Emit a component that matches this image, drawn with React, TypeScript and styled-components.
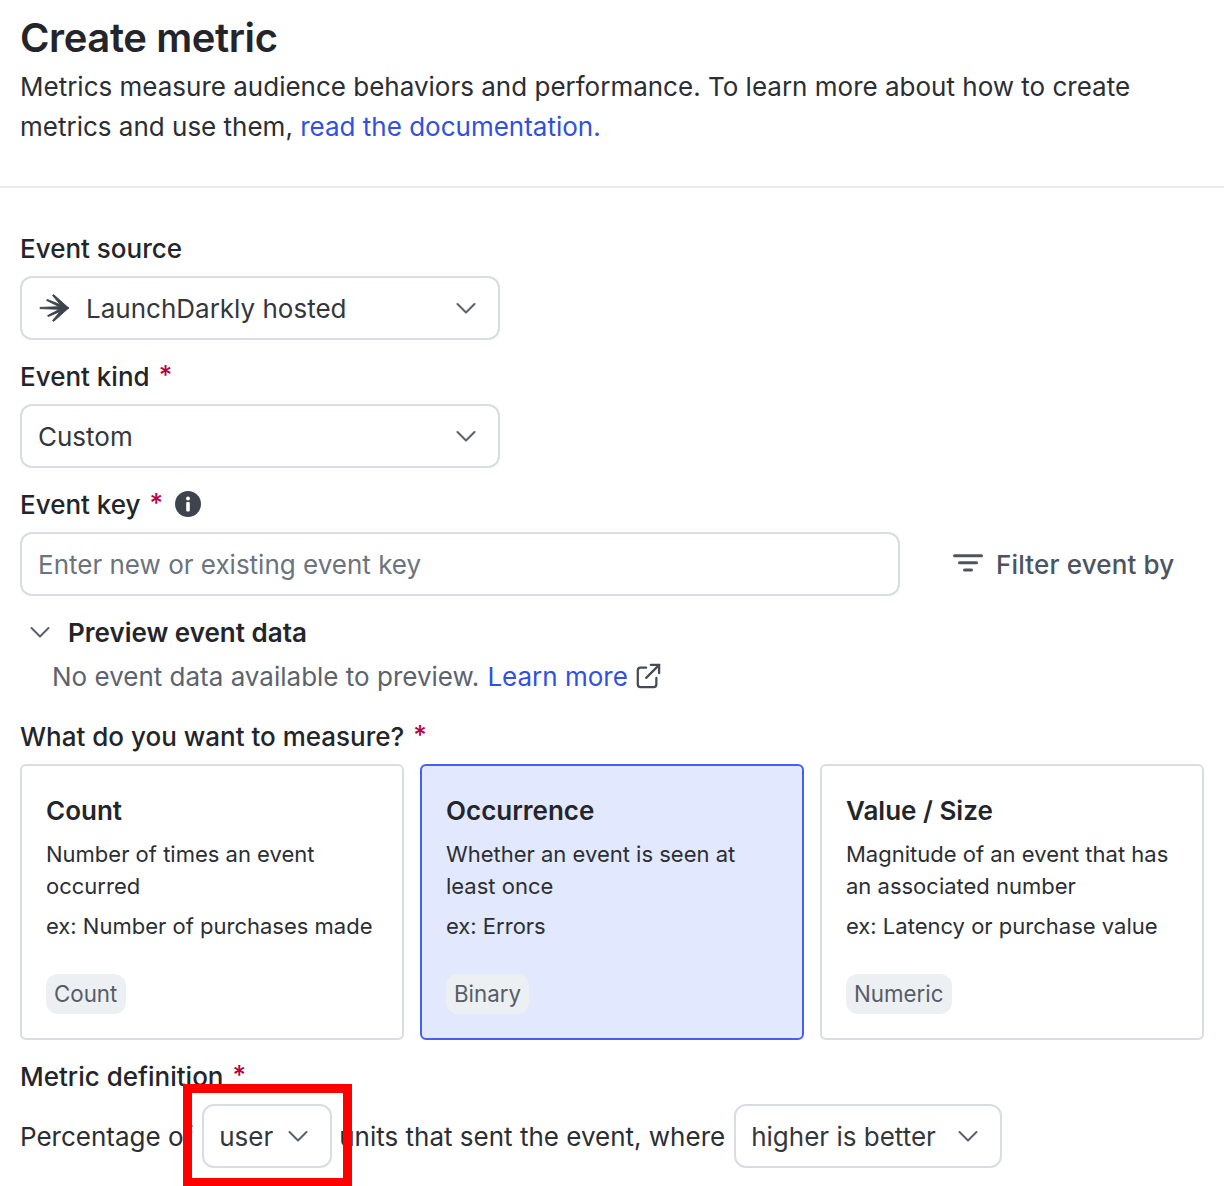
import React from 'react';
import styled, { createGlobalStyle } from 'styled-components';

const GlobalStyle = createGlobalStyle`
  html, body {
    margin: 0;
    padding: 0;
    background: #fff;
  }
  body {
    font-family: Inter, "Liberation Sans", sans-serif;
    color: #23252a;
    height: 1186px;
    overflow: hidden;
  }
`;

const Page = styled.div`
  position: relative;
  width: 1224px;
  height: 1186px;
  overflow: hidden;
`;

const Header = styled.header`
  height: 188px;
  box-sizing: border-box;
  padding: 14px 20px 0;
  border-bottom: 2px solid #e9ecef;
`;

const Title = styled.h1`
  margin: 0;
  font-size: 40px;
  line-height: 48px;
  font-weight: 600;
  letter-spacing: -0.4px;
`;

const Description = styled.p`
  margin: 5px 0 0;
  font-size: 26px;
  line-height: 40px;
  color: #2b2e33;
`;

const Link = styled.a`
  color: #3150e0;
  text-decoration: none;
`;

const Form = styled.main`
  padding: 43px 20px 0;
  display: flex;
  flex-direction: column;
`;

const Label = styled.div`
  display: flex;
  align-items: flex-start;
  height: 36px;
  font-size: 26px;
  line-height: 36px;
  font-weight: 500;
  color: #23252a;
`;

const Star = styled.span`
  color: #b8003f;
  margin-left: 9px;
  line-height: 32px;
`;

const InfoIcon = styled.svg`
  width: 28px;
  height: 28px;
  margin: 3px 0 0 11px;
  flex: none;
`;

const Field = styled.div<{ $width?: number }>`
  display: flex;
  align-items: center;
  box-sizing: border-box;
  width: ${(p) => p.$width ?? 480}px;
  height: 64px;
  margin: 9px 0 19px;
  padding: 0 20px 0 16px;
  border: 2px solid #d8dde3;
  border-radius: 12px;
  font-size: 26px;
  color: #33373d;
  background: #fff;
`;

const FieldText = styled.span`
  flex: 1;
`;

const Placeholder = styled.span`
  color: #6b737d;
`;

const Chevron = ({ size = 24 }: { size?: number }) => (
  <svg width={size} height={size} viewBox="0 0 24 24" fill="none" stroke="#5a626c" strokeWidth="2.1" strokeLinecap="round" strokeLinejoin="round">
    <path d="M3.5 8 12 16.5 20.5 8" />
  </svg>
);

const LogoIcon = styled.svg`
  width: 32px;
  height: 32px;
  margin-right: 16px;
  flex: none;
`;

const KeyRow = styled.div`
  display: flex;
  align-items: flex-start;
`;

const FilterButton = styled.div`
  display: flex;
  align-items: center;
  height: 64px;
  margin: 9px 0 0 52px;
  font-size: 26px;
  font-weight: 500;
  letter-spacing: 0.15px;
  color: #4d545e;
`;

const FilterIcon = styled.svg`
  width: 32px;
  height: 24px;
  margin-right: 12px;
`;

const Preview = styled.div`
  display: flex;
  align-items: center;
  height: 36px;
  margin: -1px 0 0 8px;
  font-size: 26px;
  font-weight: 600;
  color: #23252a;
  gap: 16px;
`;

const PreviewNote = styled.div`
  display: flex;
  align-items: center;
  height: 40px;
  margin: 6px 0 0 32px;
  font-size: 26px;
  color: #5c636d;
`;

const NoteLink = styled(Link)`
  margin-left: 8px;
`;

const ExternalIcon = styled.svg`
  width: 26px;
  height: 26px;
  margin-left: 7px;
`;

const MeasureLabel = styled(Label)`
  margin-top: 23px;
`;

const Cards = styled.div`
  display: grid;
  grid-template-columns: repeat(3, 384px);
  gap: 16px;
  margin-top: 9px;
`;

const Card = styled.div<{ $selected?: boolean }>`
  box-sizing: border-box;
  height: 276px;
  padding: 29px 24px 24px;
  display: flex;
  flex-direction: column;
  align-items: flex-start;
  border: 2px solid ${(p) => (p.$selected ? '#4460f0' : '#d8dde3')};
  border-radius: 6px;
  background: ${(p) => (p.$selected ? '#e2e8fd' : '#fff')};
`;

const CardTitle = styled.div`
  font-size: 26px;
  line-height: 32px;
  font-weight: 600;
  color: #23252a;
`;

const CardText = styled.div`
  margin-top: 11px;
  font-size: 22px;
  line-height: 32px;
  color: #2b2e33;
  white-space: nowrap;
`;

const CardExample = styled(CardText)`
  margin-top: 8px;
`;

const Tag = styled.span`
  margin-top: auto;
  padding: 0 8.5px 0 8px;
  height: 40px;
  line-height: 40px;
  border-radius: 12px;
  background: #edf0f3;
  font-size: 22.3px;
  color: #565d67;
`;

const DefinitionLabel = styled(Label)`
  margin-top: 19px;
`;

const Sentence = styled.div`
  display: flex;
  align-items: center;
  margin-top: 9px;
  font-size: 26px;
  color: #2b2e33;
`;

const InlineSelect = styled.div<{ $width: number }>`
  display: flex;
  align-items: center;
  justify-content: space-between;
  box-sizing: border-box;
  width: ${(p) => p.$width}px;
  height: 64px;
  margin: 0 7px 0 9px;
  padding: 0 20px 0 15px;
  border: 2px solid #d8dde3;
  border-radius: 12px;
  color: #33373d;
`;

const Highlight = styled.div`
  position: absolute;
  left: 183px;
  top: 1084px;
  width: 169px;
  height: 102px;
  box-sizing: border-box;
  border: 9px solid #fe0000;
  border-bottom-width: 8px;
  pointer-events: none;
`;

const cards = [
  {
    title: 'Count',
    text: ['Number of times an event', 'occurred'],
    example: 'ex: Number of purchases made',
    tag: 'Count',
  },
  {
    title: 'Occurrence',
    text: ['Whether an event is seen at', 'least once'],
    example: 'ex: Errors',
    tag: 'Binary',
    selected: true,
  },
  {
    title: 'Value / Size',
    text: ['Magnitude of an event that has', 'an associated number'],
    example: 'ex: Latency or purchase value',
    tag: 'Numeric',
  },
];

export default function App() {
  return (
    <Page>
      <GlobalStyle />
      <Header>
        <Title>Create metric</Title>
        <Description>
          Metrics measure audience behaviors and performance. To learn more about how to create
          <br />
          metrics and use them, <Link href="#">read the documentation.</Link>
        </Description>
      </Header>
      <Form>
        <Label>Event source</Label>
        <Field>
          <LogoIcon viewBox="0 0 32 32" fill="#3c434d" stroke="#3c434d" strokeWidth="0.9" strokeLinejoin="round">
            <path d="M2 15.4 24 14.6 30.6 16 24 17.4 2 16.6Z" />
            <path d="M14.6 3.6 15.6 2.6 30.6 16 27 18Z" />
            <path d="M8.6 8.4 9.2 7.4 30.6 16 26 17Z" />
            <path d="M14.6 28.4 15.6 29.4 30.6 16 27 14Z" />
            <path d="M9.6 23.6 10.2 24.6 30.6 16 26 15Z" />
          </LogoIcon>
          <FieldText>LaunchDarkly hosted</FieldText>
          <Chevron />
        </Field>
        <Label>
          Event kind<Star>*</Star>
        </Label>
        <Field>
          <FieldText>Custom</FieldText>
          <Chevron />
        </Field>
        <Label>
          Event key<Star>*</Star>
          <InfoIcon viewBox="0 0 28 28">
            <circle cx="14" cy="14" r="13" fill="#3d444e" />
            <circle cx="14" cy="8.5" r="2" fill="#fff" />
            <rect x="12.2" y="12" width="3.6" height="9.5" rx="1" fill="#fff" />
          </InfoIcon>
        </Label>
        <KeyRow>
          <Field $width={880}>
            <Placeholder>Enter new or existing event key</Placeholder>
          </Field>
          <FilterButton>
            <FilterIcon viewBox="0 0 32 24" fill="none" stroke="#4d545e" strokeWidth="3" strokeLinecap="round">
              <path d="M2.5 3.7H29.5" />
              <path d="M7.5 10.7H24.5" />
              <path d="M12.5 18H19.5" />
            </FilterIcon>
            Filter event by
          </FilterButton>
        </KeyRow>
        <Preview>
          <Chevron />
          Preview event data
        </Preview>
        <PreviewNote>
          No event data available to preview.
          <NoteLink href="#">Learn more</NoteLink>
          <ExternalIcon viewBox="0 0 28 28" fill="none" stroke="#444b55" strokeWidth="2.4" strokeLinecap="round" strokeLinejoin="round">
            <path d="M12 5H6a3 3 0 0 0-3 3v15a3 3 0 0 0 3 3h14a3 3 0 0 0 3-3v-7" />
            <path d="M17 2h9v9" />
            <path d="M26 2 12 16" />
          </ExternalIcon>
        </PreviewNote>
        <MeasureLabel>
          What do you want to measure?<Star>*</Star>
        </MeasureLabel>
        <Cards>
          {cards.map((card) => (
            <Card key={card.title} $selected={card.selected}>
              <CardTitle>{card.title}</CardTitle>
              <CardText>
                {card.text[0]}
                <br />
                {card.text[1]}
              </CardText>
              <CardExample>{card.example}</CardExample>
              <Tag>{card.tag}</Tag>
            </Card>
          ))}
        </Cards>
        <DefinitionLabel>
          Metric definition<Star>*</Star>
        </DefinitionLabel>
        <Sentence>
          Percentage of
          <InlineSelect $width={130}>
            user
            <Chevron />
          </InlineSelect>
          units that sent the event, where
          <InlineSelect $width={268}>
            higher is better
            <Chevron />
          </InlineSelect>
        </Sentence>
      </Form>
      <Highlight />
    </Page>
  );
}
